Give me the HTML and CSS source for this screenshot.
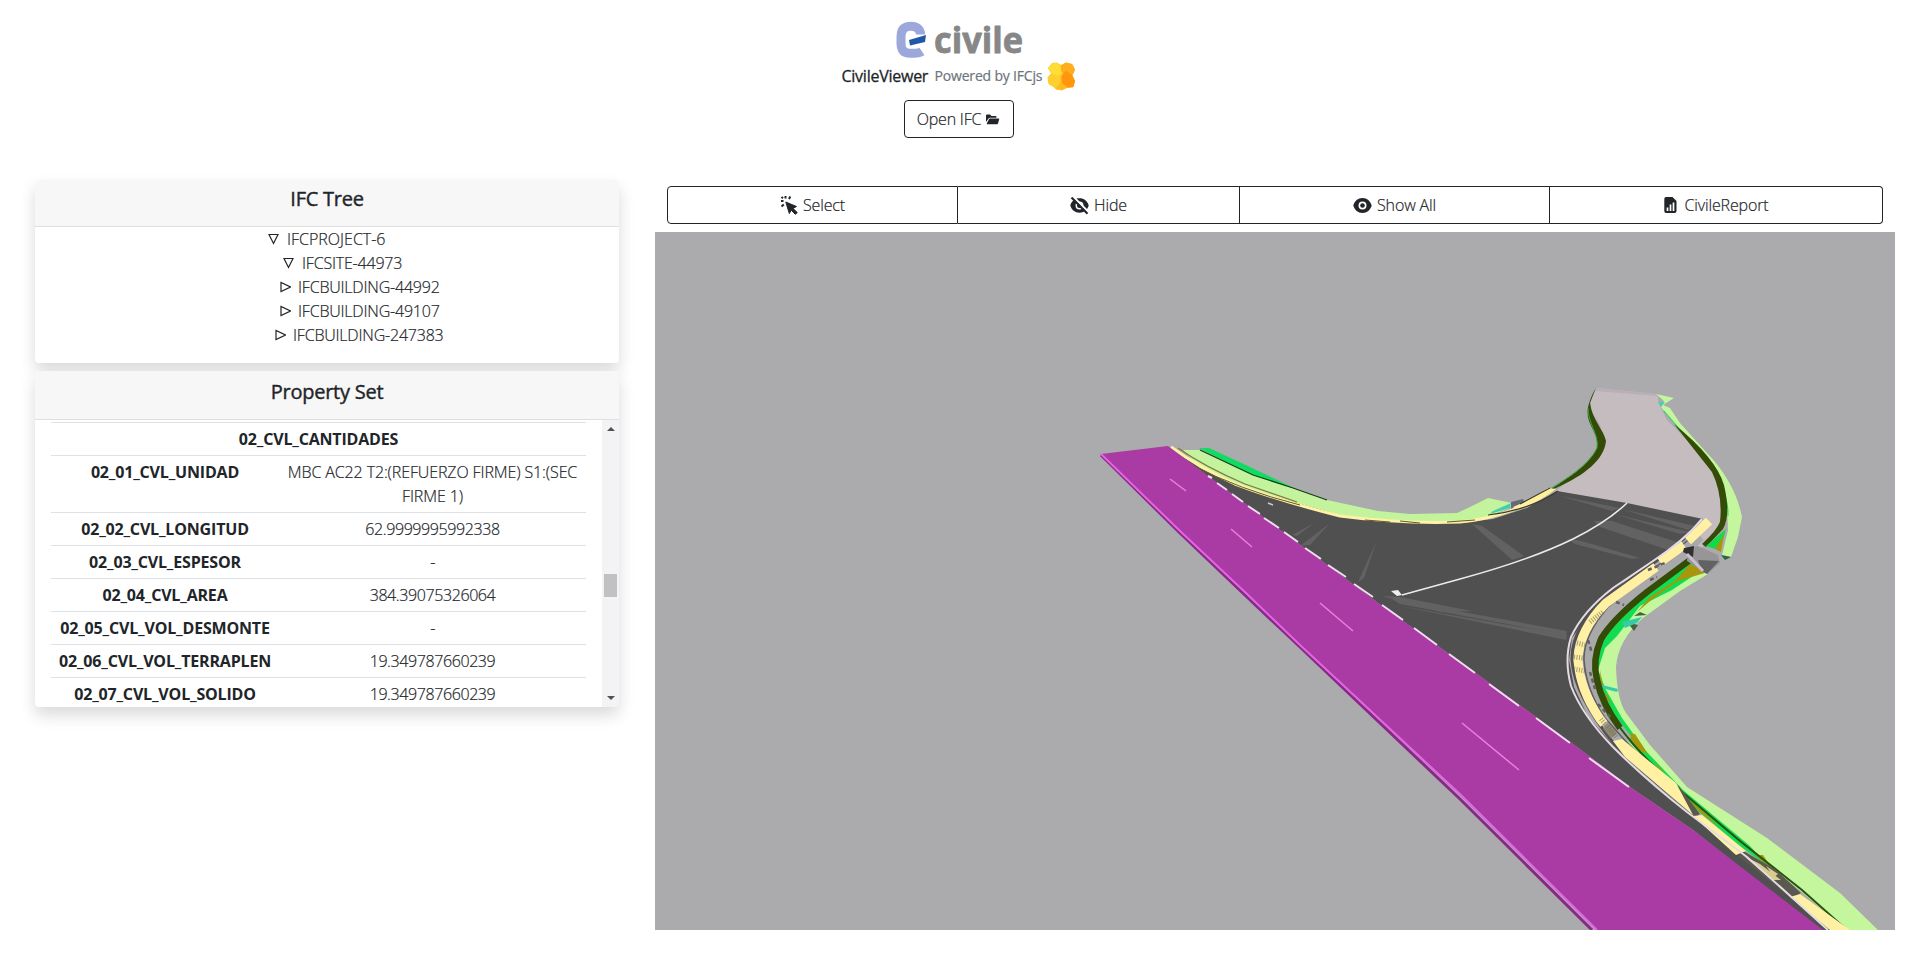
FILE: index.html
```html
<!DOCTYPE html>
<html lang="en">
<head>
<meta charset="utf-8">
<title>CivileViewer</title>
<link rel="stylesheet" href="styles.css">
</head>
<body>
<header class="top">
  <svg class="logo" width="130" height="40" viewBox="0 0 130 40">
    <path class="logo-c" d="M25.500 14.500C25.500 9 21.500 6.200 16 6.200C9 6.200 6 10 6 17V23C6 30 9 33.200 15 33.200H20Q24.500 33.200 27 31.500"/>
    <path class="logo-bar" d="M14 20L31 15L30 22L15 25.500Z"/>
    <text class="logo-text" x="39" y="33" textLength="89" lengthAdjust="spacingAndGlyphs">civile</text>
  </svg>
  <div class="brand">
    <span class="brand-name">CivileViewer</span>
    <span class="brand-by">Powered by IFCjs</span>
    <svg class="ifcjs" width="29" height="29" viewBox="0 0 29 29">
      <path fill="#ffc62a" stroke="#ffc62a" stroke-linejoin="round" d="M5 1.500L10 1L14 3.500L19 1L25 2.500L27.500 8L25 13.500L27.500 19L26 25L20 25.500L15 28L9 27L6 24L2 22L1 15.500L4.500 11.500L1.500 6Z"/>
      <path fill="#ffdd35" d="M5 1.500L10 1L15 5L16 11L11 15L4.500 11.500L1.500 6Z"/>
      <path fill="#ffae1d" stroke="#ffae1d" stroke-linejoin="round" d="M14 4L19 1L25 2.500L27.500 8L25 13L20 15L15 10Z"/>
      <path fill="#ff960c" stroke="#ff960c" stroke-linejoin="round" d="M15 14L19 9L25 13.500L27.500 19L26 24.500L20 25L15 21Z"/>
      <path fill="#ffcf2e" d="M1.500 15.500L5 12L13 14.500L14 20L9 26.500L2 22Z"/>
      <path fill="#ffba22" d="M9 26.500L14 20L20 25L15 28Z"/>
    </svg>
  </div>
  <button class="open-btn"><span>Open IFC</span>
    <svg width="14" height="11" viewBox="0 0 14 11"><path fill="#212529" d="M0 8V1.500Q0 .5 1 .5H4L5.500 2H9.500Q10.500 2 10.500 3V3.800H4Q3 3.800 2.300 4.800ZM.8 9.500L2.900 5.200Q3.200 4.500 4.100 4.500H12.600Q13.400 4.500 13.200 5.300L12 9.500Q11.800 10.200 11 10.200H1.100Q.6 10.200 .8 9.500Z"/></svg>
  </button>
</header>

<main class="main">
  <aside class="side">
    <section class="card tree-card">
      <h2 class="card-head">IFC Tree</h2>
      <ul class="tree">
        <li class="node root"><svg class="tri" viewBox="0 0 11 12"><path d="M1 1.500H10L5.500 10.500Z"/></svg><span>IFCPROJECT-6</span></li>
        <li class="node site"><svg class="tri" viewBox="0 0 11 12"><path d="M1 1.500H10L5.500 10.500Z"/></svg><span>IFCSITE-44973</span></li>
        <li class="node bld"><svg class="tri" viewBox="0 0 11 12"><path d="M1 1.500V10.500L10.500 6Z"/></svg><span>IFCBUILDING-44992</span></li>
        <li class="node bld"><svg class="tri" viewBox="0 0 11 12"><path d="M1 1.500V10.500L10.500 6Z"/></svg><span>IFCBUILDING-49107</span></li>
        <li class="node last"><svg class="tri" viewBox="0 0 11 12"><path d="M1 1.500V10.500L10.500 6Z"/></svg><span>IFCBUILDING-247383</span></li>
      </ul>
    </section>

    <section class="card prop-card">
      <h2 class="card-head">Property Set</h2>
      <div class="prop-body">
        <table class="props">
          <tbody>
            <tr><th colspan="2">02_CVL_CANTIDADES</th></tr>
            <tr><th>02_01_CVL_UNIDAD</th><td class="unit">MBC AC22 T2:(REFUERZO FIRME) S1:(SEC<br>FIRME 1)</td></tr>
            <tr><th>02_02_CVL_LONGITUD</th><td>62.9999995992338</td></tr>
            <tr><th>02_03_CVL_ESPESOR</th><td>-</td></tr>
            <tr><th>02_04_CVL_AREA</th><td>384.39075326064</td></tr>
            <tr><th>02_05_CVL_VOL_DESMONTE</th><td>-</td></tr>
            <tr><th>02_06_CVL_VOL_TERRAPLEN</th><td>19.349787660239</td></tr>
            <tr><th>02_07_CVL_VOL_SOLIDO</th><td>19.349787660239</td></tr>
          </tbody>
        </table>
        <div class="scrollbar"><i class="arrow up"></i><i class="thumb"></i><i class="arrow down"></i></div>
      </div>
    </section>
  </aside>

  <section class="viewer">
    <div class="toolbar">
      <button class="tool"><svg width="18" height="20" viewBox="0 0 18 20"><path fill="#212529" stroke="#212529" d="M5.800 7L16.500 11.500L13 13.400L17.300 17.600L15.300 19.300L11.200 15.200L9.300 18.500Z"/><path stroke="#212529" stroke-width="2" d="M5.500 1V3.500M10.300 1.500L9 4M1 6H3.500M1.500 11.500L3.800 9.500M1.500 2L3 3.300"/></svg><span>Select</span></button>
      <button class="tool"><svg width="19" height="19" viewBox="0 0 19 19"><path fill="#212529" fill-rule="evenodd" d="M9.500 2.300C5 2.300 1.500 5 .3 9.500C1.500 14 5 16.700 9.500 16.700C14 16.700 17.500 14 18.700 9.500C17.500 5 14 2.300 9.500 2.300ZM9.500 5.500A4 4 0 1 0 9.500 13.500A4 4 0 1 0 9.500 5.500Z"/><circle cx="9.500" cy="9.500" r="2.500" fill="#212529"/><path stroke="#fff" stroke-width="2.200" d="M3 .5L19 16.500"/><path stroke="#212529" stroke-width="2" d="M1.500 1.500L17.500 17.800"/></svg><span>Hide</span></button>
      <button class="tool"><svg width="19" height="17" viewBox="0 0 19 17"><path fill="#212529" fill-rule="evenodd" d="M9.500 1C5 1 1.500 4 .3 8.500C1.500 13 5 16 9.500 16C14 16 17.500 13 18.700 8.500C17.500 4 14 1 9.500 1ZM9.500 4.500A4 4 0 1 0 9.500 12.500A4 4 0 1 0 9.500 4.500Z"/><circle cx="9.500" cy="8.500" r="2.300" fill="#212529"/></svg><span>Show All</span></button>
      <button class="tool report"><svg width="13" height="16" viewBox="0 0 13 16"><path fill="#212529" d="M2 0H8.500L12.500 4V14Q12.500 16 10.500 16H2Q.3 16 .3 14V2Q.3 0 2 0Z"/><path stroke="#fff" stroke-width="1.700" d="M3.500 14V10.500M6.500 14V7.500M9.500 14V5.500"/></svg><span>CivileReport</span></button>
    </div>

    <svg class="scene" viewBox="655 232 1240 698" preserveAspectRatio="none">
      <rect x="655" y="232" width="1240" height="698" fill="#abaaac"/>

      <!-- far carriageway -->
      <path fill="#c5bcc0" d="M1596 388L1657 394L1659 404L1667 420L1680 433L1703 458L1718 483L1724 513L1714 533L1700 550L1690 545L1703 519L1556 491L1567 482L1590 464L1603 450L1605 440L1600 425L1592 412L1590 400Z"/>
      <path fill="#b9afb4" d="M1596 388L1657 394L1657 396L1595 391Z"/>
      <path fill="#334b06" d="M1596 388C1590 398 1585 410 1589 421C1593 432 1599 437 1597 448C1590 465 1565 480 1548 491L1556 488C1585 475 1604 460 1606 441C1604 430 1592 420 1590 403Z"/>
      <path fill="none" stroke="#35a83c" stroke-width="1" d="M1588 408C1588 424 1599 434 1597 448C1588 466 1566 479 1550 489"/>

      <!-- near verge -->
      <path fill="#11dc62" d="M1199 448L1209 448L1250 467L1294 488L1290 490L1253 476Z"/>
      <path fill="#c3f39d" d="M1183 450L1200 450L1253 475L1293 488L1327 500L1378 511L1410 514L1457 513L1470 507L1488 498L1512 503L1510 508L1487 517L1460 523L1400 522L1350 518L1297 505L1240 487L1200 468Z"/>
      <path fill="none" stroke="#173d16" stroke-width="1.300" d="M1200 450L1253 475L1293 488L1327 500"/>
      <path fill="#43cdb0" d="M1493 511L1511 503L1510 508L1490 514Z"/>
      <path fill="#666a78" d="M1511 502L1523 499L1524 502L1511 509Z"/>

      <!-- asphalt -->
      <path fill="#505050" d="M1170 448L1200 468L1230 483L1267 494L1297 503L1340 515L1378 520L1420 523L1460 523L1493 519L1527 508L1557 491L1627 503L1703 519L1672 548L1627 579L1592 610L1572 638L1569 660L1574 687L1588 717L1615 747L1649 780L1689 812L1749 857L1838 930H1820L1693 830L1630 787L1573 744L1477 674L1403 621L1378 603L1247 505Z"/>
      <g fill="#747474" fill-opacity=".5">
        <path d="M1472 524L1482 526L1524 556L1512 560Z"/>
        <path d="M1567 538L1585 542L1640 558L1632 559L1575 544Z"/>
        <path d="M1594 521L1612 521L1680 543L1668 550L1600 527Z"/>
        <path d="M1560 496L1620 508L1612 511ZM1622 509L1695 526L1688 530ZM1614 514L1690 532L1680 534Z"/>
        <path d="M1382 596L1400 597L1472 611L1440 612ZM1392 599L1567 631L1566 635L1400 604ZM1400 606L1567 635L1566 640Z"/>
        <path d="M1300 546L1330 523L1310 545ZM1292 535L1314 523L1297 536ZM1358 582L1377 540L1364 578Z"/>
      </g>
      <path fill="none" stroke="#eee9ee" stroke-width="1.600" d="M1627 503Q1607 522 1573 539Q1530 560 1460 579L1402 595"/>
      <path fill="#eee" d="M1391 591L1398 590L1402 595L1397 596Z"/>
      <path stroke="#ccc" stroke-width="1.500" d="M1268 503L1273 505"/>

      <!-- near kerb -->
      <path fill="none" stroke="#fff2a6" stroke-width="3" d="M1171 447Q1200 468 1235 484Q1280 501 1340 516Q1400 524 1460 522Q1490 519 1515 509"/>
      <path fill="none" stroke="#7c763d" stroke-width="1.200" d="M1178 448Q1205 467 1245 484L1297 502"/>
      <path fill="none" stroke="#645a24" stroke-width="1" d="M1190 464Q1240 490 1300 505M1365 520L1390 522M1400 521L1420 523M1447 522L1475 520"/>
      <path fill="#fff0a0" d="M1517 510Q1540 502 1556 489L1548 488Q1533 499 1513 507Z"/>
      <path fill="none" stroke="#3e3d29" stroke-width="1.200" d="M1488 515Q1530 510 1558 491M1520 504L1550 488"/>

      <!-- right verge -->
      <path fill="#c4f69d" d="M1708 574L1680 591L1643 618Q1618 640 1616 667Q1617 700 1626 713L1650 745L1687 787L1767 838L1840 893L1878 930H1845L1803 893L1740 842L1683 793L1640 755L1612 722L1597 690L1594 660L1605 632L1645 594L1690 561Z"/>
      <path fill="#12dc51" d="M1690 560L1708 566L1672 590L1640 606L1617 636L1605 648L1598 670L1606 690L1622 718L1645 750L1683 790L1750 846L1770 868L1740 846L1673 790L1617 728L1600 700L1594 665L1602 638L1642 598Z"/>
      <path fill="#a8960d" d="M1690 564L1708 572L1678 581L1655 597L1637 612L1650 597L1675 581ZM1600 670L1603 685L1601 686ZM1605 692L1611 703L1606 699ZM1627 734L1635 734L1648 754L1639 750ZM1655 762L1672 783L1660 774ZM1680 792L1705 813L1720 828L1700 812ZM1755 855L1763 855L1773 870Z"/>
      <path fill="#4b5f43" d="M1640 612L1647 615L1634 616ZM1627 622L1638 625L1634 631Z"/>
      <path fill="#36cba9" d="M1622 622L1642 617L1637 623L1625 628ZM1602 685L1618 689L1617 692L1602 688Z"/>
      <path fill="none" stroke="#a9a8aa" stroke-width="11" d="M1700 536L1680 554L1655 573L1617 606Q1590 632 1588 660Q1590 690 1610 718L1627 740"/>
      <path fill="none" stroke="#344c05" stroke-width="6.500" d="M1690 560L1647 592Q1613 619 1601 639Q1592 660 1597 680Q1602 704 1620 728"/>
      <path fill="none" stroke="#28530f" stroke-width="2" d="M1618 725Q1640 755 1675 786L1740 841L1802 890L1847 930"/>
      <path fill="none" stroke="#605f61" stroke-width="1.600" d="M1694 535L1648 574L1608 607Q1583 636 1584 660Q1586 690 1605 718L1629 745L1674 786"/>

      <!-- kerb and edge line -->
      <path fill="none" stroke="#535052" stroke-width="3" d="M1702 524L1655 562L1610 594Q1571 626 1572 660Q1574 695 1615 745Q1650 780 1717 832L1840 928"/>
      <path fill="#5b594f" d="M1678 785L1700 814L1694 817L1680 800ZM1745 852L1775 869L1801 893L1791 898L1738 856Z"/>
      <path fill="none" stroke="#fff0a4" stroke-width="9" d="M1709 521L1688 541M1684 545L1660 562M1656 567L1606 603Q1579 630 1578 660Q1580 690 1600 719L1604 724"/>
      <path fill="#fff0a4" d="M1613 741L1622 739L1676 783L1693 815L1660 787L1625 757ZM1693 816L1702 815L1746 851L1736 855ZM1790 897L1800 894L1850 930H1830Z"/>
      <path fill="none" stroke="#8d8565" stroke-width="8" stroke-opacity=".8" d="M1606 726L1614 736"/>
      <path fill="#d8cc8d" d="M1744 856L1760 864L1781 880L1772 880ZM1766 866L1778 874L1774 877Z"/>
      <g fill="none" stroke="#686651" stroke-width="5" stroke-opacity=".6" stroke-dasharray="1 1.500">
        <path d="M1590 622L1603 612M1577 643L1585 645M1574 657L1583 658M1574 669L1585 671M1601 719L1616 737"/>
      </g>
      <g fill="none" stroke="#60605f" stroke-width="2.500" stroke-dasharray="4 3">
        <path d="M1648 570L1665 563M1650 580L1657 577M1616 602L1624 605M1588 640L1592 653M1590 672L1595 689M1598 704L1611 718"/>
      </g>
      <path fill="none" stroke="#e5dbe5" stroke-width="2" d="M1702 519Q1685 540 1653 561L1613 588Q1583 611 1571 637Q1564 660 1571 686Q1582 715 1613 747Q1645 779 1687 812L1747 857L1828 930"/>

      <!-- far right embankment -->
      <path fill="#c4f69d" d="M1656 394L1674 398L1663 405L1670 408L1680 423L1707 453Q1735 482 1742 517L1738 537L1731 557L1722 555L1728 530L1727 505L1718 480L1702 454L1680 430L1668 416L1661 407L1664 401Z"/>
      <path fill="#4fcbbb" d="M1658 402L1665 402L1661 407Z"/>
      <path fill="none" stroke="#14d45a" stroke-width="1" d="M1664 411L1683 433L1703 455Q1729 490 1728 516"/>
      <path fill="#344c05" d="M1674 424Q1716 458 1724 485Q1731 515 1723 529L1706 547L1702 544Q1717 530 1720 522Q1723 495 1712 472Z"/>
      <path fill="#0fdc49" d="M1706 546L1726 529L1722 544L1715 549Z"/>
      <path fill="#a8960d" d="M1715 549L1724 534L1721 552Z"/>
      <path fill="#2e6243" d="M1721 555L1731 557L1725 560Z"/>
      <path fill="#979597" d="M1688 548L1698 546L1718 555L1720 563L1707 574L1687 561Z"/>
      <path fill="#626163" d="M1698 560L1719 561L1707 574L1701 570Z"/>
      <path fill="#303032" d="M1684 548L1694 546L1693 557L1683 552Z"/>
      <path stroke="#cbbdd0" stroke-width="3" d="M1687 554L1703 571"/>

      <!-- main road -->
      <path fill="#aa3aa4" d="M1101 454L1168 446L1247 505L1378 603L1403 621L1477 674L1573 744L1630 787L1693 830L1823 930H1597L1462 797L1300 645L1247 595L1180 532Z"/>
      <path fill="none" stroke="#872987" stroke-width="3" d="M1101 455L1180 533L1247 597L1300 647L1460 799L1592 930"/>
      <path fill="none" stroke="#e365e3" stroke-width="2" d="M1101 454L1180 531L1247 594L1300 645L1462 796L1597 930"/>
      <path fill="none" stroke="#e980df" stroke-width="1.500" d="M1170 479L1186 491M1231 529L1252 547M1320 603L1353 631M1462 723L1519 770"/>
      <path fill="none" stroke="#f1dcf1" stroke-width="2" d="M1208 476L1212 478M1217 483L1227 490M1232 494L1243 502M1248 506L1260 514M1264 518L1279 528M1284 532L1298 542M1305 548L1321 559M1328 565L1346 577M1354 584L1373 597M1382 605L1403 620M1414 628L1437 645M1449 654L1475 673M1489 684L1519 706M1536 718L1570 743M1589 758L1629 787"/>
    </svg>
  </section>
</main>
</body>
</html>
```

FILE: styles.css
```css
* { box-sizing: border-box; }

body {
  margin: 0;
  width: 1917px;
  height: 964px;
  overflow: hidden;
  background: #fff;
  color: #212529;
  font-family: "Open Sans", "Noto Sans", sans-serif;
  font-size: 16px;
  font-weight: 300;
  line-height: 24px;
}

button {
  font: inherit;
  color: inherit;
  background: #fff;
  border: 1px solid #212529;
}

.open-btn, .tool, .tree, .props td { -webkit-text-stroke: 0.2px #212529; }

.top {
  height: 180px;
  padding-top: 20px;
  display: flex;
  flex-direction: column;
  align-items: center;
}

.logo { display: block; margin-left: 3px; overflow: visible; }
.logo-c { fill: none; stroke: #9ca8dc; stroke-width: 9; }
.logo-bar { fill: #2058a8; }
.logo-text {
  font-family: "Open Sans", sans-serif;
  font-weight: 700;
  font-size: 36px;
  fill: #878787;
  stroke: #878787;
  stroke-width: 0.8px;
  stroke-linejoin: round;
}

.brand { display: flex; align-items: center; height: 29px; margin-top: 2px; }
.brand-name, .brand-by { position: relative; top: -1px; white-space: nowrap; }
.brand-name { width: 88px; font-weight: 500; font-size: 16px; letter-spacing: -0.25px; -webkit-text-stroke: 0.3px #212529; }
.brand-by { width: 107px; margin-left: 5px; font-size: 14px; font-weight: 500; letter-spacing: -0.18px; color: #6c757d; -webkit-text-stroke: 0.2px #6c757d; }
.ifcjs { margin-left: 5px; }

.open-btn {
  width: 110px;
  height: 38px;
  margin-top: 9px;
  padding: 0;
  border-radius: 4px;
  display: flex;
  align-items: center;
  justify-content: center;
  gap: 5px;
  letter-spacing: -0.2px;
}

.main { display: flex; align-items: flex-start; padding-left: 35px; }
.side { width: 584px; display: flex; flex-direction: column; gap: 8px; }

.card {
  background: #fff;
  border-radius: 4px;
  box-shadow: 0 8px 16px rgba(0, 0, 0, .15);
  overflow: hidden;
}
.tree-card { height: 183px; }
.prop-card { height: 336px; }

.card-head {
  margin: 0;
  height: 47px;
  padding-top: 7px;
  background: #f7f7f7;
  border-bottom: 1px solid #dfdfdf;
  text-align: center;
  font-size: 20px;
  font-weight: 500;
  line-height: 24px;
  letter-spacing: -0.25px;
  -webkit-text-stroke: 0.4px #212529;
}
.prop-card .card-head { height: 49px; padding-top: 9px; }

.tree { margin: 0; padding: 0; list-style: none; letter-spacing: -0.2px; }
.node { height: 24px; display: flex; align-items: center; gap: 8px; line-height: 24px; }
.root { padding-left: 233px; letter-spacing: 0; }
.site { padding-left: 248px; }
.bld { padding-left: 245px; }
.last { padding-left: 240px; }
.bld, .last { gap: 7px; }
.tri { width: 11px; height: 12px; fill: none; stroke: #212529; stroke-width: 1.2; }

.prop-body { height: 287px; display: flex; justify-content: space-between; padding: 2px 0 0 16px; overflow: hidden; }
.props { width: 535px; table-layout: auto; border-collapse: collapse; align-self: flex-start; }
.props th, .props td {
  padding: 4px;
  border-top: 1px solid #dee2e6;
  text-align: center;
  vertical-align: top;
  white-space: nowrap;
}
.props th { width: 228px; font-weight: 700; letter-spacing: -0.18px; }
.props td { letter-spacing: -0.4px; }
.props .unit { letter-spacing: -0.12px; }

.scrollbar {
  width: 17px;
  height: 287px;
  margin-top: -2px;
  background: #f3f2f4;
  display: flex;
  flex-direction: column;
  align-items: center;
}
.arrow { border: 4px solid transparent; }
.up { margin-top: 3px; border-bottom-color: #505050; }
.down { margin-top: 99px; border-top-color: #505050; }
.thumb { width: 13px; height: 23px; margin-top: 143px; background: #c1c0c2; }

.viewer { width: 1240px; margin-left: 36px; padding-top: 6px; }
.toolbar { width: 1216px; height: 38px; margin: 0 0 8px 12px; display: grid; grid-template-columns: 291px 282px 310px 333px; }
.tool {
  padding: 0;
  display: flex;
  align-items: center;
  justify-content: center;
  gap: 5px;
  letter-spacing: -0.15px;
}
.tool + .tool { border-left: 0; }
.tool:first-child { border-radius: 4px 0 0 4px; }
.tool:last-child { border-radius: 0 4px 4px 0; }
.report { gap: 8px; }
.scene { display: block; width: 1240px; height: 698px; }
```
